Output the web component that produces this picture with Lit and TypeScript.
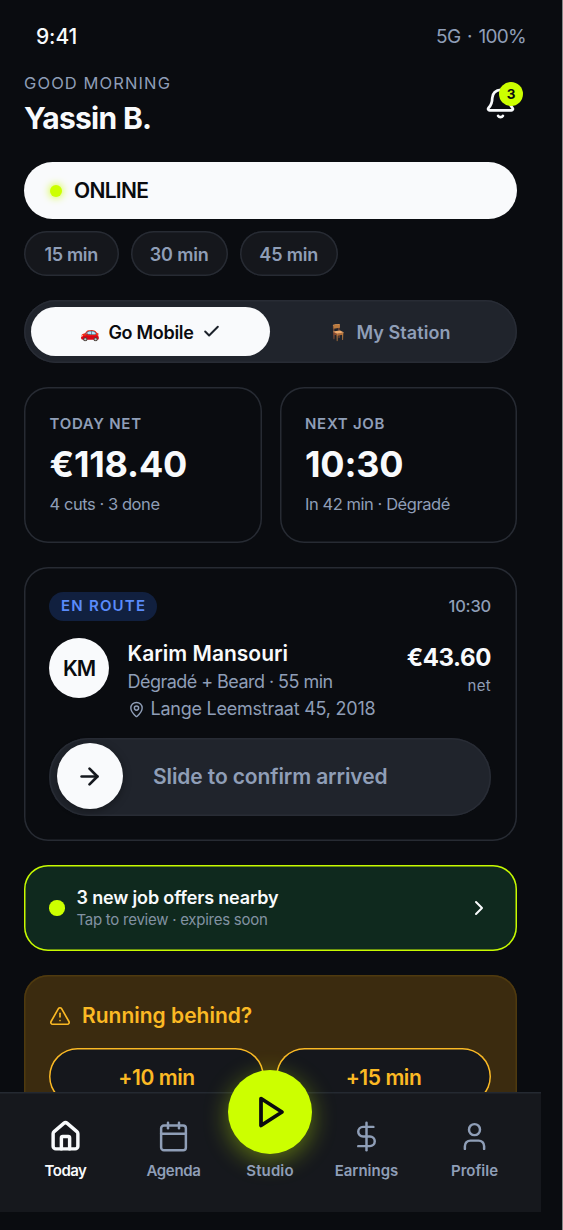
import { LitElement, html, css, svg } from "lit";
import { customElement, property } from "lit/decorators.js";

const icons: Record<string, unknown> = {
  bell: svg`<path d="M10.268 21a2 2 0 0 0 3.464 0"/><path d="M3.262 15.326A1 1 0 0 0 4 17h16a1 1 0 0 0 .74-1.673C19.41 13.956 18 12.499 18 8A6 6 0 0 0 6 8c0 4.499-1.411 5.956-2.738 7.326"/>`,
  check: svg`<path d="M20 6 9 17l-5-5"/>`,
  pin: svg`<path d="M20 10c0 4.993-5.539 10.193-7.399 11.799a1 1 0 0 1-1.202 0C9.539 20.193 4 14.993 4 10a8 8 0 0 1 16 0"/><circle cx="12" cy="10" r="3"/>`,
  arrow: svg`<path d="M5 12h14"/><path d="m12 5 7 7-7 7"/>`,
  chevron: svg`<path d="m9 18 6-6-6-6"/>`,
  alert: svg`<path d="m21.73 18-8-14a2 2 0 0 0-3.48 0l-8 14A2 2 0 0 0 4 21h16a2 2 0 0 0 1.73-3"/><path d="M12 9v4"/><path d="M12 17h.01"/>`,
  home: svg`<path d="M15 21v-8a1 1 0 0 0-1-1h-4a1 1 0 0 0-1 1v8"/><path d="M3 10a2 2 0 0 1 .709-1.528l7-5.999a2 2 0 0 1 2.582 0l7 5.999A2 2 0 0 1 21 10v9a2 2 0 0 1-2 2H5a2 2 0 0 1-2-2z"/>`,
  calendar: svg`<path d="M8 2v4"/><path d="M16 2v4"/><rect width="18" height="18" x="3" y="4" rx="2"/><path d="M3 10h18"/>`,
  play: svg`<path d="M6 3 20 12 6 21Z"/>`,
  dollar: svg`<path d="M12 2v20"/><path d="M17 5H9.5a3.5 3.5 0 0 0 0 7h5a3.5 3.5 0 0 1 0 7H6"/>`,
  user: svg`<path d="M19 21v-2a4 4 0 0 0-4-4H9a4 4 0 0 0-4 4v2"/><circle cx="12" cy="7" r="4"/>`,
};

@customElement("ui-icon")
export class UiIcon extends LitElement {
  @property() name = "";
  @property({ type: Number }) size = 24;
  @property({ type: Number }) weight = 2;
  static styles = css`
    :host { display: block; flex: none; }
    svg {
      display: block;
      fill: none;
      stroke: currentColor;
      stroke-linecap: round;
      stroke-linejoin: round;
    }
  `;
  render() {
    return html`<svg viewBox="0 0 24 24" width=${this.size} height=${this.size} stroke-width=${this.weight}>${icons[this.name]}</svg>`;
  }
}

@customElement("app-root")
export class AppRoot extends LitElement {
  static styles = css`
    * { box-sizing: border-box; }
    :host {
      display: block;
      position: relative;
      width: 563px;
      height: 1230px;
      overflow: hidden;
      background: #0a0c10;
      border-right: 1px solid #858688;
      box-sizing: border-box;
      color: #f8fafc;
      font-family: Inter, sans-serif;
      font-weight: 500;
      white-space: nowrap;
      --muted: #8f9eb7;
      --lime: #ccff00;
      --line: #272b33;
      --amber: #fbb924;
    }
    .status {
      display: flex;
      justify-content: space-between;
      padding: 0 36px;
      height: 72px;
      line-height: 74px;
      font-size: 21px;
      letter-spacing: -0.11px;
    }
    .signal { font-size: 19px; font-weight: 400; letter-spacing: -0.7px; word-spacing: 2px; color: var(--muted); }
    .content { width: 541px; padding: 0 24px; }

    .header { display: flex; justify-content: space-between; height: 90px; }
    .greeting { font-size: 16.5px; font-weight: 400; letter-spacing: 1.1px; line-height: 22px; color: var(--muted); }
    .name { font-size: 30px; font-weight: 700; letter-spacing: -0.7px; line-height: 38px; margin-top: 5px; }
    .bell { position: relative; height: 33px; margin-top: 15px; }
    .badge {
      position: absolute;
      left: 15px;
      top: -5px;
      width: 24px;
      height: 24px;
      border-radius: 50%;
      background: var(--lime);
      color: #0a0b0f;
      font-size: 13.5px;
      font-weight: 700;
      line-height: 24px;
      text-align: center;
    }

    .online {
      display: flex;
      align-items: center;
      gap: 12.5px;
      height: 57px;
      padding-left: 25.5px;
      border-radius: 29px;
      background: #f9fafc;
      color: #0a0b0f;
      font-size: 21px;
      font-weight: 600;
      letter-spacing: -0.7px;
    }
    .online-dot { width: 12px; height: 12px; border-radius: 50%; background: var(--lime); box-shadow: 0 0 9px var(--lime); }

    .chips { display: flex; gap: 12px; margin-top: 12px; }
    .chip {
      height: 45px;
      width: 97.5px;
      border-radius: 23px;
      background: #15171c;
      box-shadow: inset 0 0 0 1.5px var(--line);
      color: var(--muted);
      font-size: 18px;
      font-weight: 600;
      letter-spacing: -0.15px;
      line-height: 47px;
      text-align: center;
    }
    .chip:first-child { width: 94.5px; letter-spacing: -0.35px; }

    .toggle {
      display: grid;
      grid-template-columns: 1fr 1fr;
      height: 63px;
      margin-top: 24px;
      padding: 7px 8px 7px 7px;
      border-radius: 32px;
      background: #20242c;
      box-shadow: inset 0 0 0 1.5px #282c35;
    }
    .segment { display: flex; align-items: center; justify-content: center; gap: 8px; border-radius: 25px; color: var(--muted); font-size: 18px; font-weight: 600; letter-spacing: 0.08px; line-height: 24px; }
    .segment-label { padding-top: 2px; }
    .segment-active { background: #f9fafc; color: #0a0b0f; letter-spacing: -0.3px; }
    .emoji { font-size: 16px; letter-spacing: 0; }
    .tick { color: #1d222b; }

    .stats { display: grid; grid-template-columns: 1fr 1fr; gap: 18px; margin-top: 24px; }
    .card { border-radius: 24px; box-shadow: inset 0 0 0 1.5px var(--line); }
    .stat { height: 156px; padding: 26px 25.5px 0; }
    .stat-label { font-size: 15px; font-weight: 600; letter-spacing: 0.72px; line-height: 22px; color: var(--muted); }
    .stat-value { font-size: 36px; font-weight: 700; letter-spacing: -0.2px; line-height: 52px; margin-top: 3px; }
    .stat-note { font-size: 16.5px; font-weight: 400; letter-spacing: -0.44px; line-height: 22px; margin-top: 3px; color: var(--muted); }

    .job { height: 274px; margin-top: 24px; padding: 25px 26px 25px 25px; }
    .job-top { display: flex; justify-content: space-between; align-items: center; height: 29px; }
    .pill {
      height: 29px;
      padding: 0 11px 0 12px;
      border-radius: 15px;
      background: #11203f;
      color: #5a8bfa;
      font-size: 15px;
      font-weight: 600;
      letter-spacing: 1.21px;
      line-height: 28px;
    }
    .job-time { font-size: 16.5px; letter-spacing: -0.2px; color: var(--muted); line-height: 20px; margin-top: -2px; }
    .job-main { display: flex; height: 84px; margin-top: 17px; }
    .avatar {
      width: 60px;
      height: 60px;
      border-radius: 50%;
      background: #f9fafc;
      color: #0a0b0f;
      font-size: 21px;
      font-weight: 600;
      letter-spacing: -1px;
      line-height: 61px;
      text-align: center;
    }
    .info { flex: 1; padding: 2px 0 0 18.5px; font-size: 18px; font-weight: 400; color: var(--muted); }
    .client { font-size: 21px; font-weight: 600; line-height: 28px; color: #f8fafc; }
    .service { letter-spacing: -0.54px; line-height: 28px; }
    .address { display: flex; align-items: center; gap: 6px; letter-spacing: -0.24px; line-height: 26px; }
    .price { padding-top: 4px; text-align: right; }
    .amount { font-size: 24px; font-weight: 700; letter-spacing: -0.4px; line-height: 32px; }
    .net { font-size: 15px; font-weight: 400; letter-spacing: 0.3px; line-height: 20px; margin-top: 2px; color: var(--muted); }
    .slider {
      display: flex;
      align-items: center;
      height: 78px;
      margin-top: 16px;
      padding: 0 73px 2px 7.5px;
      border-radius: 39px;
      background: #20242c;
      box-shadow: inset 0 0 0 1.5px #282c35;
    }
    .knob {
      display: grid;
      place-items: center;
      width: 66px;
      height: 66px;
      border-radius: 50%;
      background: #f9fafc;
      color: #15181e;
      box-shadow: 0 2px 8px rgba(0, 0, 0, 0.35);
    }
    .slider-text { flex: 1; text-align: center; font-size: 21px; font-weight: 600; letter-spacing: -0.12px; color: var(--muted); padding-top: 1px; }

    .offer {
      display: flex;
      align-items: center;
      gap: 12px;
      height: 86px;
      margin-top: 24px;
      padding: 0 26px 0 25px;
      border-radius: 24px;
      background: #0f291e;
      box-shadow: inset 0 0 0 1.5px #c8fa00;
    }
    .offer-dot { width: 15.5px; height: 15.5px; border-radius: 50%; background: var(--lime); }
    .offer-copy { flex: 1; padding-top: 1px; line-height: 22px; }
    .offer-title { font-size: 18px; font-weight: 600; letter-spacing: -0.16px; }
    .offer-note { font-size: 15px; font-weight: 400; letter-spacing: -0.26px; color: #8292a2; }

    .late { height: 156px; margin-top: 24px; padding: 25px 26px 25px 25px; border-radius: 24px; background: #3b2b0f; box-shadow: inset 0 0 0 1.5px #4f3a0f; color: var(--amber); font-size: 21px; font-weight: 600; }
    .late-title { display: flex; align-items: center; gap: 11px; height: 31px; letter-spacing: 0; }
    .late-actions { display: grid; grid-template-columns: 1fr 1fr; gap: 12px; margin-top: 17px; }
    .delay { height: 57px; border-radius: 29px; background: #15171c; box-shadow: inset 0 0 0 1.5px var(--amber); letter-spacing: -0.45px; line-height: 59px; text-align: center; }

    .nav {
      position: absolute;
      left: 0;
      top: 1092px;
      width: 541px;
      height: 120px;
      padding: 0 12.5px 0 11.5px;
      display: grid;
      grid-template-columns: 1fr 1fr 85px 1fr 1fr;
      background: #16181d;
      box-shadow: inset 0 1.5px 0 #242931;
    }
    .tab { display: flex; flex-direction: column; align-items: center; gap: 8px; padding-top: 28px; color: var(--muted); font-size: 15px; font-weight: 600; line-height: 20px; }
    .tab-active { color: #f8fafc; letter-spacing: -0.5px; }
    .tab-wide { letter-spacing: 0; }
    .tab-tight { letter-spacing: -0.35px; }
    .tab-studio { padding-top: 0; gap: 7px; letter-spacing: 0.12px; }
    .fab {
      display: grid;
      place-items: center;
      width: 84px;
      height: 84px;
      margin-top: -22px;
      border-radius: 50%;
      background: var(--lime);
      color: #0a0b0f;
      box-shadow: 0 6px 24px rgba(204, 255, 0, 0.4);
    }
  `;

  render() {
    return html`
      <div class="status"><span>9:41</span><span class="signal">5G · 100%</span></div>
      <div class="content">
        <div class="header">
          <div>
            <div class="greeting">GOOD MORNING</div>
            <div class="name">Yassin B.</div>
          </div>
          <div class="bell"><ui-icon name="bell" size="33"></ui-icon><span class="badge">3</span></div>
        </div>

        <div class="online"><span class="online-dot"></span>ONLINE</div>
        <div class="chips">${[15, 30, 45].map((m) => html`<div class="chip">${m} min</div>`)}</div>

        <div class="toggle">
          <div class="segment segment-active">
            <span class="emoji">🚗</span><span class="segment-label">Go Mobile</span>
            <ui-icon class="tick" name="check" size="19" weight="2.5"></ui-icon>
          </div>
          <div class="segment"><span class="emoji">🪑</span><span class="segment-label">My Station</span></div>
        </div>

        <div class="stats">
          <div class="card stat">
            <div class="stat-label">TODAY NET</div>
            <div class="stat-value">€118.40</div>
            <div class="stat-note">4 cuts · 3 done</div>
          </div>
          <div class="card stat">
            <div class="stat-label">NEXT JOB</div>
            <div class="stat-value">10:30</div>
            <div class="stat-note">In 42 min · Dégradé</div>
          </div>
        </div>

        <div class="card job">
          <div class="job-top"><span class="pill">EN ROUTE</span><span class="job-time">10:30</span></div>
          <div class="job-main">
            <div class="avatar">KM</div>
            <div class="info">
              <div class="client">Karim Mansouri</div>
              <div class="service">Dégradé + Beard · 55 min</div>
              <div class="address"><ui-icon name="pin" size="17"></ui-icon>Lange Leemstraat 45, 2018</div>
            </div>
            <div class="price">
              <div class="amount">€43.60</div>
              <div class="net">net</div>
            </div>
          </div>
          <div class="slider">
            <div class="knob"><ui-icon name="arrow" size="27" weight="2.4"></ui-icon></div>
            <div class="slider-text">Slide to confirm arrived</div>
          </div>
        </div>

        <div class="offer">
          <span class="offer-dot"></span>
          <div class="offer-copy">
            <div class="offer-title">3 new job offers nearby</div>
            <div class="offer-note">Tap to review · expires soon</div>
          </div>
          <ui-icon name="chevron" size="24"></ui-icon>
        </div>

        <div class="late">
          <div class="late-title"><ui-icon name="alert" size="22" weight="1.8"></ui-icon>Running behind?</div>
          <div class="late-actions">
            <div class="delay">+10 min</div>
            <div class="delay">+15 min</div>
          </div>
        </div>
      </div>

      <div class="nav">
        <div class="tab tab-active"><ui-icon name="home" size="33" weight="2.5"></ui-icon>Today</div>
        <div class="tab tab-tight"><ui-icon name="calendar" size="33" weight="1.8"></ui-icon>Agenda</div>
        <div class="tab tab-studio"><div class="fab"><ui-icon name="play" size="36" weight="2.5"></ui-icon></div>Studio</div>
        <div class="tab tab-wide"><ui-icon name="dollar" size="33" weight="1.8"></ui-icon>Earnings</div>
        <div class="tab tab-wide"><ui-icon name="user" size="33" weight="1.8"></ui-icon>Profile</div>
      </div>
    `;
  }
}
